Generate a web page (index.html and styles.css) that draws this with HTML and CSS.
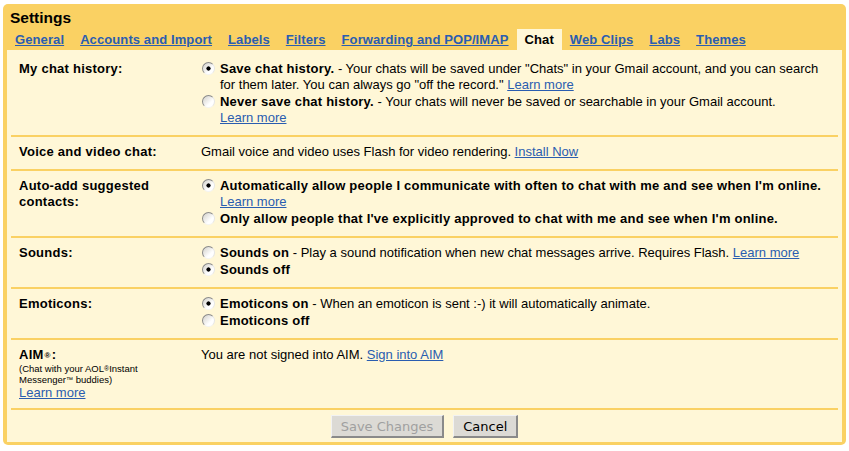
FILE: index.html
```html
<!DOCTYPE html>
<html lang="en">
<head>
    <meta charset="UTF-8">
    <title>Settings - Chat</title>
    <link rel="stylesheet" href="styles.css">
</head>
<body>

    <div class="settings">
        <div class="title">Settings</div>
        <div class="tabs">
            <a href="#">General</a>
            <a href="#">Accounts and Import</a>
            <a href="#">Labels</a>
            <a href="#">Filters</a>
            <a href="#">Forwarding and POP/IMAP</a>
            <span class="current">Chat</span>
            <a href="#">Web Clips</a>
            <a href="#">Labs</a>
            <a href="#">Themes</a>
        </div>

        <div class="panel">
            <div class="row">
                <div class="label">My chat history:</div>
                <div class="value">
                    <label class="option"><input type="radio" name="history" checked><span><b>Save chat history.</b> - Your chats will be saved under "Chats" in your Gmail account, and you can search for them later. You can always go "off the record." <a href="#">Learn more</a></span></label>
                    <label class="option"><input type="radio" name="history"><span><b>Never save chat history.</b> - Your chats will never be saved or searchable in your Gmail account.<br><a href="#">Learn more</a></span></label>
                </div>
            </div>

            <div class="row">
                <div class="label">Voice and video chat:</div>
                <div class="value">Gmail voice and video uses Flash for video rendering. <a href="#">Install Now</a></div>
            </div>

            <div class="row">
                <div class="label">Auto-add suggested contacts:</div>
                <div class="value">
                    <label class="option"><input type="radio" name="autoadd" checked><span><b>Automatically allow people I communicate with often to chat with me and see when I'm online.</b><br><a href="#">Learn more</a></span></label>
                    <label class="option"><input type="radio" name="autoadd"><span><b>Only allow people that I've explicitly approved to chat with me and see when I'm online.</b></span></label>
                </div>
            </div>

            <div class="row">
                <div class="label">Sounds:</div>
                <div class="value">
                    <label class="option"><input type="radio" name="sounds"><span><b>Sounds on</b> - Play a sound notification when new chat messages arrive. Requires Flash. <a href="#">Learn more</a></span></label>
                    <label class="option"><input type="radio" name="sounds" checked><span><b>Sounds off</b></span></label>
                </div>
            </div>

            <div class="row">
                <div class="label">Emoticons:</div>
                <div class="value">
                    <label class="option"><input type="radio" name="emoticons" checked><span><b>Emoticons on</b> - When an emoticon is sent :-) it will automatically animate.</span></label>
                    <label class="option"><input type="radio" name="emoticons"><span><b>Emoticons off</b></span></label>
                </div>
            </div>

            <div class="row last">
                <div class="label">
                    AIM<span class="mark">®</span>:
                    <div class="note">(Chat with your AOL<span class="mark">®</span>Instant Messenger<span class="mark">™</span> buddies)</div>
                    <a href="#" class="plain">Learn more</a>
                </div>
                <div class="value">You are not signed into AIM. <a href="#">Sign into AIM</a></div>
            </div>

            <div class="actions">
                <button disabled>Save Changes</button>
                <button>Cancel</button>
            </div>
        </div>
    </div>

</body>
</html>
```

FILE: styles.css
```css
body {
    margin: 0;
    font-family: "Liberation Sans", Arial, sans-serif;
    font-size: 13px;
    color: #000;
    background-color: #fff;
}
a {
    color: #2a5db0;
}
.settings {
    margin: 4px 3px 0;
    padding: 0 4px 3px;
    border-radius: 5px;
    background-color: #fad163;
}
.title {
    font-size: 15.5px;
    font-weight: bold;
    line-height: 20px;
    padding: 4px 3px 1px;
}
.tabs {
    display: flex;
    height: 21px;
}
.tabs a,
.tabs .current {
    padding: 0 8px;
    line-height: 21px;
    font-size: 13px;
    font-weight: bold;
    letter-spacing: 0.1px;
}
.tabs .current {
    background-color: #fff7d7;
}
.panel {
    padding-top: 4px;
    background-color: #fff7d7;
}
.row {
    display: grid;
    grid-template-columns: 182px 1fr;
    margin: 0 4px;
    padding: 7px 9px 9px 8px;
    line-height: 16px;
    border-bottom: 2px solid #fad163;
}
.row.last {
    padding-bottom: 7px;
}
.label {
    padding-right: 12px;
    font-size: 13px;
    font-weight: bold;
    letter-spacing: 0.25px;
}
.mark {
    font-size: 8px;
    line-height: 1;
    margin: 0 1px;
    vertical-align: 1px;
}
.note {
    font-size: 9.5px;
    font-weight: normal;
    letter-spacing: 0;
    line-height: 11px;
}
.note .mark {
    font-size: 7px;
    margin: 0;
    vertical-align: 1px;
}
.label .plain {
    font-weight: normal;
    letter-spacing: 0;
}
.value b {
    letter-spacing: 0.22px;
}
.option {
    display: flex;
    gap: 5px;
}
.option + .option {
    margin-top: 1px;
}
.option input {
    -webkit-appearance: none;
    appearance: none;
    flex: none;
    width: 13px;
    height: 13px;
    margin: 1px 0 0 1px;
    border: 1px solid;
    border-color: #8a8a8a #e6e6e6 #f4f4f4 #8a8a8a;
    border-radius: 50%;
    background: linear-gradient(135deg, #d2d0ca, #fff 65%);
}
.option input:checked {
    background: radial-gradient(circle, #000 0 1.8px, transparent 2.4px), linear-gradient(135deg, #d2d0ca, #fff 65%);
}
.actions {
    display: flex;
    justify-content: center;
    gap: 9px;
    margin: 0 4px;
    padding: 5px 0 4px;
}
button {
    height: 23px;
    padding: 0 9px;
    font-family: "DejaVu Sans", sans-serif;
    font-size: 13px;
    color: #000;
    background-color: #dcdad5;
    border-style: solid;
    border-width: 1px 2px 2px 1px;
    border-color: #f2f2f2 #8a8a8a #8a8a8a #f2f2f2;
}
button:disabled {
    color: #a0a0a0;
}
```
